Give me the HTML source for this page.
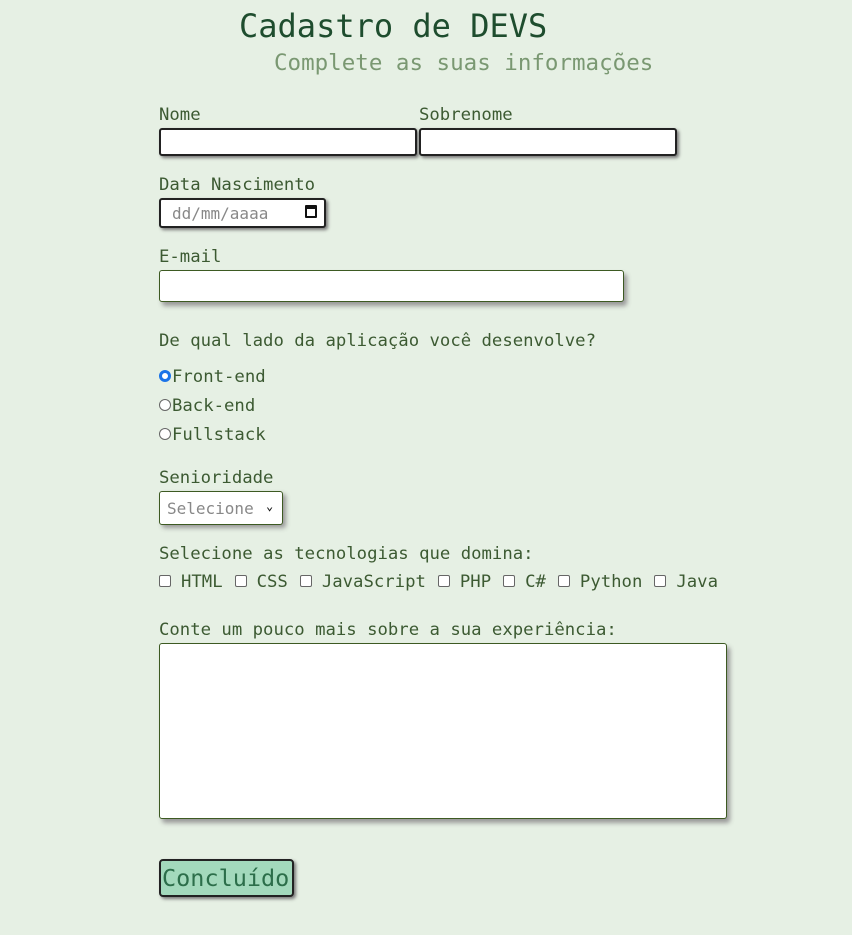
<!DOCTYPE html>
<html><head><meta charset="utf-8"><style>
body{margin:0;width:852px;height:935px;background:#e6f0e4;font-family:"DejaVu Sans Mono","Liberation Mono",monospace;color:#3c5a32;position:relative;overflow:hidden}
.a{position:absolute;white-space:nowrap}
.t{font-size:17.3px;}
.box{position:absolute;background:#fff;box-sizing:border-box;border-radius:3px}
.dark{border:2px solid #222;box-shadow:2px 2px 3px #777}
.grn{border:1px solid #3d5a22;box-shadow:3px 4px 5px #999}
.rad{display:inline-block;width:12px;height:12px;border:1px solid #666;border-radius:50%;box-sizing:border-box;vertical-align:0px;background:#fff;margin-right:1px}
.cb{display:inline-block;width:12px;height:12px;border:1px solid #666;border-radius:2px;box-sizing:border-box;background:#fff;margin-right:10px;vertical-align:0}
.lb{margin-right:12px}
</style></head><body>
<div class="a" style="left:239px;top:7px;font-size:32px;color:#1e4d2e">Cadastro de DEVS</div>
<div class="a" style="left:274px;top:50px;font-size:22.5px;color:#7a9872">Complete as suas informações</div>

<div class="a t" style="left:159px;top:105px">Nome</div>
<div class="a t" style="left:419px;top:105px">Sobrenome</div>
<div class="box dark" style="left:159px;top:128px;width:258px;height:28px"></div>
<div class="box dark" style="left:419px;top:128px;width:258px;height:28px"></div>

<div class="a t" style="left:159px;top:175px">Data Nascimento</div>
<div class="box dark" style="left:159px;top:198px;width:167px;height:30px"></div>
<div class="a" style="left:172px;top:204px;font-size:16px;color:#888">dd/mm/aaaa</div>
<div class="a" style="left:305px;top:205px;width:12px;height:13px;border:2px solid #111;border-top-width:4px;box-sizing:border-box;border-radius:1px"></div>

<div class="a t" style="left:159px;top:247px">E-mail</div>
<div class="box grn" style="left:159px;top:270px;width:465px;height:32px"></div>

<div class="a t" style="left:159px;top:331px">De qual lado da aplicação você desenvolve?</div>
<div class="a t" style="left:159px;top:367px"><span class="rad" style="border:3px solid #1a73e8"></span>Front-end</div>
<div class="a t" style="left:159px;top:396px"><span class="rad"></span>Back-end</div>
<div class="a t" style="left:159px;top:425px"><span class="rad"></span>Fullstack</div>

<div class="a t" style="left:159px;top:468px">Senioridade</div>
<div class="box grn" style="left:159px;top:491px;width:124px;height:34px;box-shadow:3px 3px 5px #999"></div>
<div class="a" style="left:167px;top:499px;font-size:16px;color:#888">Selecione</div>
<div class="a" style="left:266px;top:499px;font-size:12px;color:#111;font-weight:bold">⌄</div>

<div class="a t" style="left:159px;top:544px">Selecione as tecnologias que domina:</div>
<div class="a t" style="left:159px;top:572px"><span class="cb"></span><span class="lb">HTML</span><span class="cb"></span><span class="lb">CSS</span><span class="cb"></span><span class="lb">JavaScript</span><span class="cb"></span><span class="lb">PHP</span><span class="cb"></span><span class="lb">C#</span><span class="cb"></span><span class="lb">Python</span><span class="cb"></span>Java</div>

<div class="a t" style="left:159px;top:620px">Conte um pouco mais sobre a sua experiência:</div>
<div class="box grn" style="left:159px;top:643px;width:568px;height:176px"></div>

<div class="box dark" style="left:159px;top:859px;width:135px;height:38px;background:#a3d9bc;border-radius:4px"></div>
<div class="a" style="left:162px;top:864px;font-size:23.5px;color:#2c6e4a">Concluído</div>
</body></html>
